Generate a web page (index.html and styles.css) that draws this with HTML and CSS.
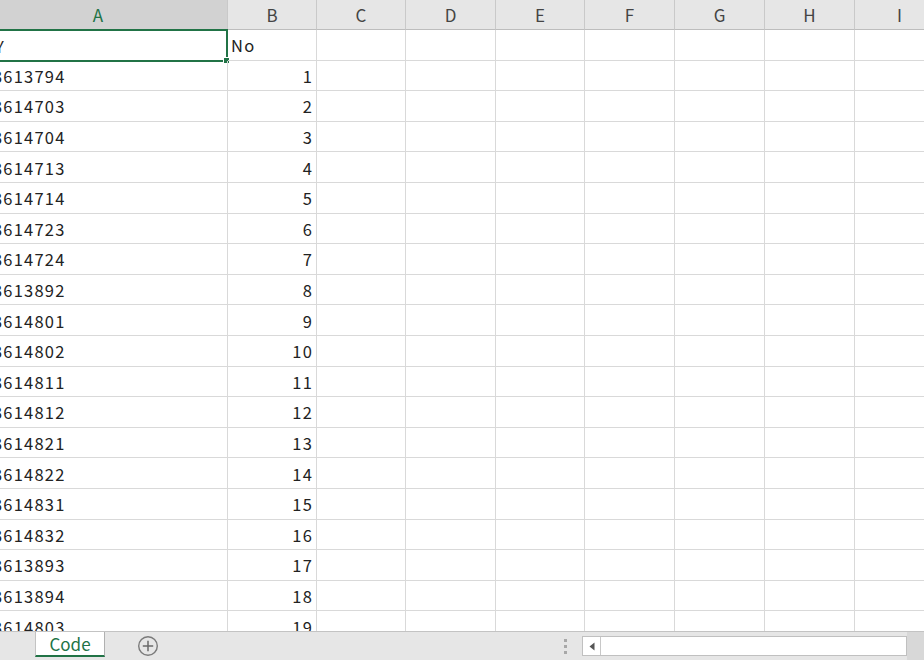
FILE: index.html
```html
<!DOCTYPE html>
<html>
<head>
<meta charset="utf-8">
<link rel="stylesheet" href="styles.css">
</head>
<body>
<div class="app">
  <div class="sheet">
    <div class="grid">
      <div class="hd hd-sel">A</div>
      <div class="hd">B</div>
      <div class="hd">C</div>
      <div class="hd">D</div>
      <div class="hd">E</div>
      <div class="hd">F</div>
      <div class="hd">G</div>
      <div class="hd">H</div>
      <div class="hd">I</div>

      <div class="c ca active">Y<span class="handle"></span></div><div class="c">No</div><div class="c"></div><div class="c"></div><div class="c"></div><div class="c"></div><div class="c"></div><div class="c"></div><div class="c"></div>
      <div class="c ca">3613794</div><div class="c num">1</div><div class="c"></div><div class="c"></div><div class="c"></div><div class="c"></div><div class="c"></div><div class="c"></div><div class="c"></div>
      <div class="c ca">3614703</div><div class="c num">2</div><div class="c"></div><div class="c"></div><div class="c"></div><div class="c"></div><div class="c"></div><div class="c"></div><div class="c"></div>
      <div class="c ca">3614704</div><div class="c num">3</div><div class="c"></div><div class="c"></div><div class="c"></div><div class="c"></div><div class="c"></div><div class="c"></div><div class="c"></div>
      <div class="c ca">3614713</div><div class="c num">4</div><div class="c"></div><div class="c"></div><div class="c"></div><div class="c"></div><div class="c"></div><div class="c"></div><div class="c"></div>
      <div class="c ca">3614714</div><div class="c num">5</div><div class="c"></div><div class="c"></div><div class="c"></div><div class="c"></div><div class="c"></div><div class="c"></div><div class="c"></div>
      <div class="c ca">3614723</div><div class="c num">6</div><div class="c"></div><div class="c"></div><div class="c"></div><div class="c"></div><div class="c"></div><div class="c"></div><div class="c"></div>
      <div class="c ca">3614724</div><div class="c num">7</div><div class="c"></div><div class="c"></div><div class="c"></div><div class="c"></div><div class="c"></div><div class="c"></div><div class="c"></div>
      <div class="c ca">3613892</div><div class="c num">8</div><div class="c"></div><div class="c"></div><div class="c"></div><div class="c"></div><div class="c"></div><div class="c"></div><div class="c"></div>
      <div class="c ca">3614801</div><div class="c num">9</div><div class="c"></div><div class="c"></div><div class="c"></div><div class="c"></div><div class="c"></div><div class="c"></div><div class="c"></div>
      <div class="c ca">3614802</div><div class="c num">10</div><div class="c"></div><div class="c"></div><div class="c"></div><div class="c"></div><div class="c"></div><div class="c"></div><div class="c"></div>
      <div class="c ca">3614811</div><div class="c num">11</div><div class="c"></div><div class="c"></div><div class="c"></div><div class="c"></div><div class="c"></div><div class="c"></div><div class="c"></div>
      <div class="c ca">3614812</div><div class="c num">12</div><div class="c"></div><div class="c"></div><div class="c"></div><div class="c"></div><div class="c"></div><div class="c"></div><div class="c"></div>
      <div class="c ca">3614821</div><div class="c num">13</div><div class="c"></div><div class="c"></div><div class="c"></div><div class="c"></div><div class="c"></div><div class="c"></div><div class="c"></div>
      <div class="c ca">3614822</div><div class="c num">14</div><div class="c"></div><div class="c"></div><div class="c"></div><div class="c"></div><div class="c"></div><div class="c"></div><div class="c"></div>
      <div class="c ca">3614831</div><div class="c num">15</div><div class="c"></div><div class="c"></div><div class="c"></div><div class="c"></div><div class="c"></div><div class="c"></div><div class="c"></div>
      <div class="c ca">3614832</div><div class="c num">16</div><div class="c"></div><div class="c"></div><div class="c"></div><div class="c"></div><div class="c"></div><div class="c"></div><div class="c"></div>
      <div class="c ca">3613893</div><div class="c num">17</div><div class="c"></div><div class="c"></div><div class="c"></div><div class="c"></div><div class="c"></div><div class="c"></div><div class="c"></div>
      <div class="c ca">3613894</div><div class="c num">18</div><div class="c"></div><div class="c"></div><div class="c"></div><div class="c"></div><div class="c"></div><div class="c"></div><div class="c"></div>
      <div class="c ca">3614803</div><div class="c num">19</div><div class="c"></div><div class="c"></div><div class="c"></div><div class="c"></div><div class="c"></div><div class="c"></div><div class="c"></div>
      <div class="c ca">3614804</div><div class="c num">20</div><div class="c"></div><div class="c"></div><div class="c"></div><div class="c"></div><div class="c"></div><div class="c"></div><div class="c"></div>
    </div>
  </div>
  <div class="tabbar">
    <div class="tab">Code</div>
    <div class="addsheet">
      <svg width="22" height="22" viewBox="0 0 22 22">
        <circle cx="11" cy="11" r="9.3" fill="none" stroke="#7a7a7a" stroke-width="1.4"/>
        <path d="M11 5.8V16.2M5.8 11H16.2" stroke="#6a6a6a" stroke-width="1.5"/>
      </svg>
    </div>
    <div class="spacer"></div>
    <div class="dots"><span></span><span></span><span></span></div>
    <div class="hscroll">
      <div class="arrow"><svg width="6" height="9" viewBox="0 0 6 9"><path d="M5.5 0.5V8.5L0.5 4.5Z" fill="#555"/></svg></div>
      <div class="track"></div>
    </div>
    <div class="rightpad"></div>
  </div>
</div>
</body>
</html>
```
FILE: styles.css
```css
html, body {
  margin: 0;
  padding: 0;
  width: 924px;
  height: 660px;
  overflow: hidden;
  background: #ffffff;
}

.app {
  width: 924px;
  height: 660px;
  display: flex;
  flex-direction: column;
  font-family: "Noto Sans CJK JP", "Noto Sans", sans-serif;
}

.sheet {
  height: 631px;
  overflow: hidden;
  flex: none;
}

.grid {
  display: grid;
  margin-left: -31px;
  grid-template-columns: 259px 89px 89px 90px 89px 90px 90px 90px 90px;
  grid-template-rows: 30px repeat(20, 30.6px);
}

.hd {
  box-sizing: border-box;
  background: #e6e6e6;
  border-right: 1px solid #c9c9c9;
  border-bottom: 1px solid #bdbdbd;
  color: #444444;
  font-size: 17px;
  display: flex;
  align-items: center;
  justify-content: center;
  font-family: "Noto Sans CJK JP", "Noto Sans", sans-serif;
}

.hd-sel {
  background: #d2d2d2;
  color: #217346;
  border-bottom: 1px solid #9e9e9e;
}

.c {
  box-sizing: border-box;
  position: relative;
  border-right: 1px solid #d9d9d9;
  border-bottom: 1px solid #d9d9d9;
  font-size: 16.5px;
  letter-spacing: 1.2px;
  color: #222222;
  display: flex;
  align-items: center;
  padding-left: 3px;
  padding-top: 1px;
  white-space: nowrap;
}

.ca {
  padding-left: 24px;
}

.num {
  justify-content: flex-end;
  padding-left: 0;
  padding-right: 3px;
}

.active {
  border: 2px solid #217346;
  margin-top: -1px;
  margin-bottom: -1px;
}

.handle {
  position: absolute;
  right: -4px;
  bottom: -4px;
  width: 5px;
  height: 5px;
  background: #217346;
  border: 1px solid #ffffff;
}

.tabbar {
  flex: none;
  height: 29px;
  box-sizing: border-box;
  border-top: 1px solid #c3c3c3;
  background: #e6e6e6;
  display: flex;
  align-items: flex-start;
}

.tab {
  margin-left: 35px;
  width: 70px;
  height: 25px;
  box-sizing: border-box;
  background: #ffffff;
  border-left: 1px solid #c3c3c3;
  border-right: 1px solid #b0b0b0;
  border-bottom: 2px solid #217346;
  color: #217346;
  font-size: 17px;
  display: flex;
  align-items: center;
  justify-content: center;
  padding-bottom: 1px;
  font-family: "Noto Sans CJK JP", "Noto Sans", sans-serif;
}

.addsheet {
  margin-left: 32px;
  margin-top: 3px;
  width: 22px;
  height: 22px;
  display: flex;
}

.spacer {
  flex: 1;
}

.dots {
  display: flex;
  flex-direction: column;
  gap: 3px;
  margin-top: 7px;
  margin-right: 15px;
}

.dots span {
  width: 3px;
  height: 3px;
  background: #a8a8a8;
}

.hscroll {
  margin-top: 4px;
  width: 325px;
  height: 20px;
  box-sizing: border-box;
  border: 1px solid #c0c0c0;
  background: #ffffff;
  display: flex;
}

.arrow {
  width: 18px;
  box-sizing: border-box;
  border-right: 1px solid #c8c8c8;
  display: flex;
  align-items: center;
  justify-content: center;
}

.track {
  flex: 1;
}

.rightpad {
  width: 17px;
  align-self: stretch;
  background: #d8d8d8;
}
```
